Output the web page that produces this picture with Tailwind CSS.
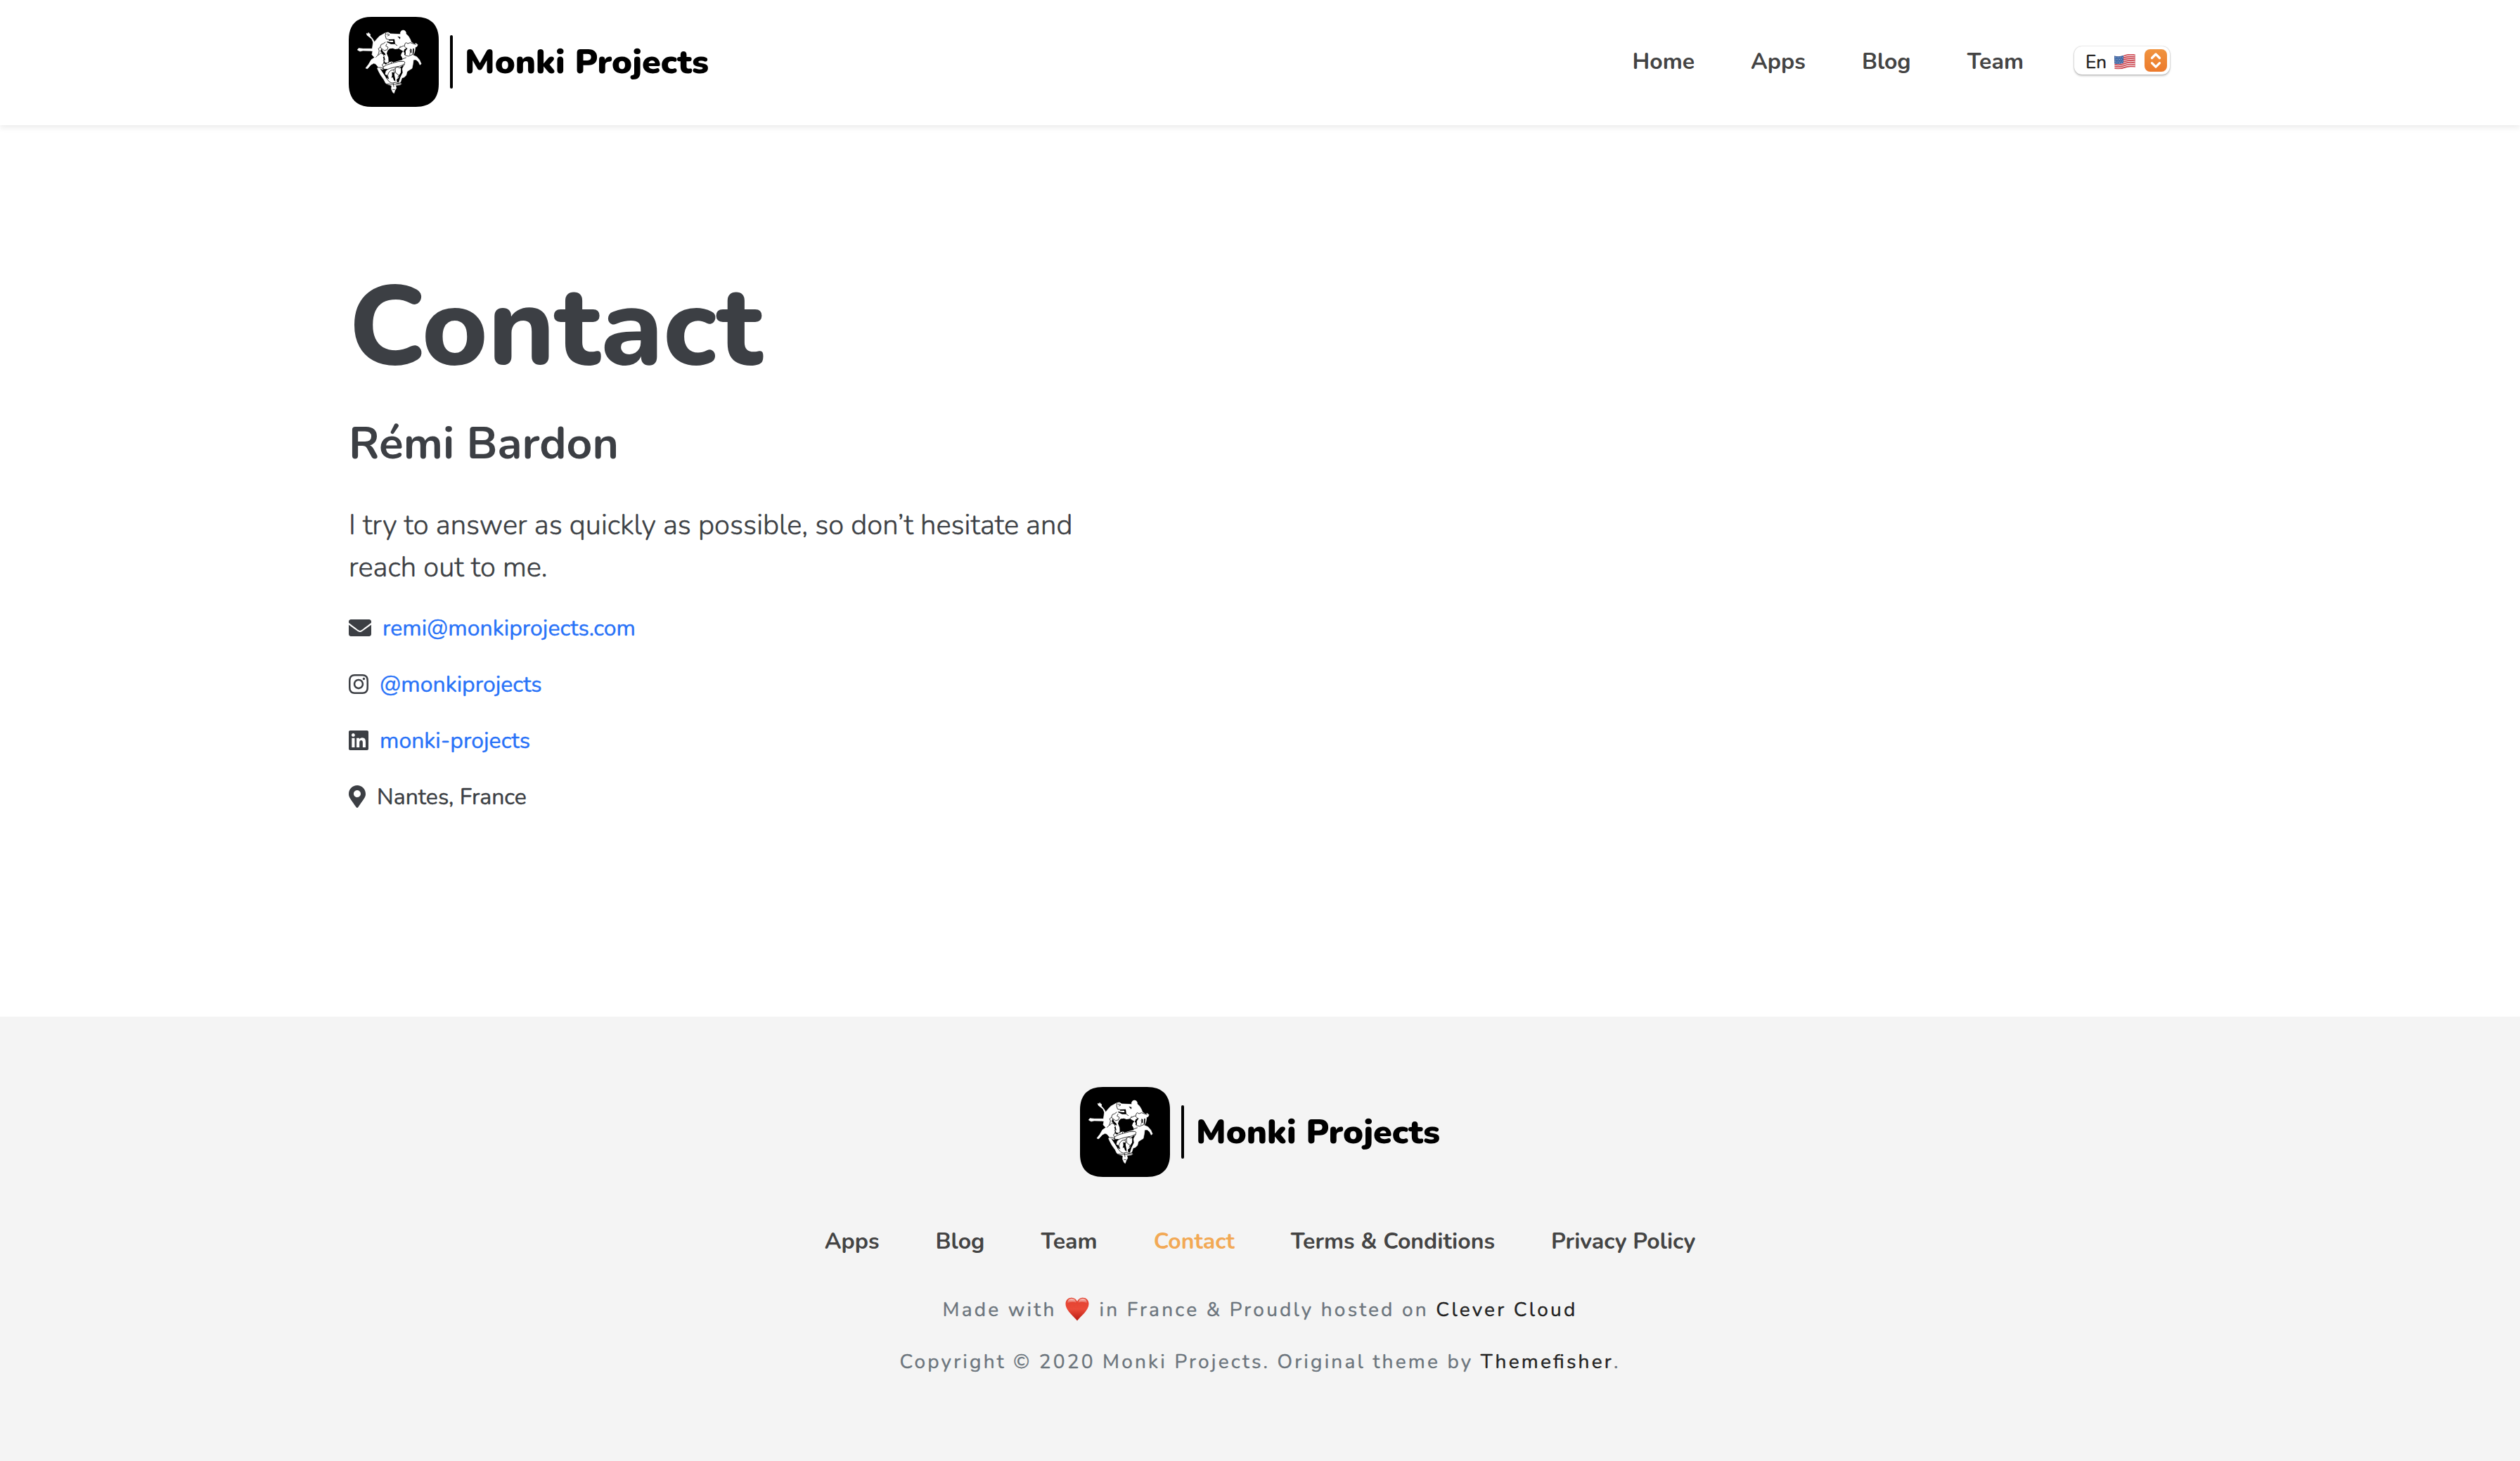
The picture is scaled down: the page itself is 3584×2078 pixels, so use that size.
<!DOCTYPE html>
<html lang="en">
<head>
<meta charset="utf-8">
<title>Contact - Monki Projects</title>
<script src="https://cdn.jsdelivr.net/npm/@tailwindcss/browser@4"></script>
</head>
<body class="bg-white font-[Nunito,Lato,'Open_Sans',sans-serif] text-[#3c3f44]">
<svg class="absolute size-0">
  <defs>
    <linearGradient id="heart" x1="0" y1="0" x2="0" y2="1">
      <stop offset="0" stop-color="#e2402e"/><stop offset=".5" stop-color="#ea4a38"/><stop offset="1" stop-color="#b81a12"/>
    </linearGradient>
    <linearGradient id="shine" x1="0" y1="0" x2="0" y2="1">
      <stop offset="0" stop-color="#fff" stop-opacity=".75"/><stop offset="1" stop-color="#fff" stop-opacity="0"/>
    </linearGradient>
    <symbol id="monki" viewBox="48 42 384 384">
      <path d="M48 140C48 76 82 42 146 42H334C398 42 432 76 432 140V328C432 392 398 426 334 426H146C82 426 48 392 48 328Z"/>
      <path fill="#fff" stroke="#fff" stroke-width="2" stroke-linejoin="round" d="M124 112L130 115L132 109L136 114L140 116L139 123L150 136L158 149L167 137L180 124L196 115L205 110L216 108L226 114L245 115L268 116L269 107Q272 99 280 99Q289 99 292 108L292 114L302 124L310 137L315 150L328 158L336 155L342 161L339 168L332 172L330 188L326 200L321 205L338 212L350 226L357 242L352 247L345 233L335 225L324 225L322 242L318 262L306 269L297 275L293 291L284 300L275 302L268 323L273 328L266 332L248 334L251 346L245 356L241 368L236 364L230 350L231 335L212 329L205 324L198 310L184 290L176 275L170 262L174 256L163 243L155 240L143 246L128 263L120 261L133 244L144 225L158 215L151 208L147 203L150 188L140 187L108 186L96 189L85 183L90 176L110 178L148 178L150 165L152 150L146 136L136 128L126 120Z"/>
      <path d="M214 186L222 178L236 176L246 180L262 178L272 184L280 188L274 196L270 206L276 216L277 226L255 231L238 236L230 232L218 235L217 215L210 198ZM219 138L243 137L246 158L228 158L210 150L212 147L230 150L238 150L237 143L219 143ZM183 188L188 177L194 190L203 198L205 206L194 202ZM256 125L268 128L267 137L262 132ZM198 212L203 222L200 236L212 240L206 245L195 238L200 228L194 214ZM181 262L192 268L208 264L214 266L206 274L203 287L212 291L216 303L218 306L208 303L196 284ZM281 247L276 264L278 280L268 300L261 322L254 322L252 310L262 300L262 292L270 280L271 262L266 258ZM232 278L242 280L243 292L246 306L247 318L240 312L236 300L230 302L233 292ZM310 178L316 180L316 197L311 193ZM322 176L327 178L325 200L320 200ZM286 180L298 174L292 190L290 204L285 204L286 194L281 192Z"/>
      <g fill="none" stroke="#000" stroke-width="2.300" stroke-linejoin="round" stroke-linecap="round">
        <path d="M206 111L204 122L208 136L219 139M210 116Q216 112 222 119L214 123M204 150L196 156L186 160L182 172L174 178L178 186L176 196L172 206L164 214M182 172L190 178L200 186L212 182L216 172L206 166L210 158M246 158L254 164M268 172L280 166L286 166L288 156L292 152L300 156L310 152L316 154L334 160M260 180L268 168M286 168L296 178M174 206L184 196L196 202L200 216L196 230L206 240L220 236M288 206L302 210L312 206L322 202M276 222L292 216M198 240L190 246L196 256L194 264M194 256Q206 246 232 240Q260 230 284 232Q292 236 284 244Q270 254 246 256Q220 262 208 268L194 264M286 244L276 260M218 238L220 232L228 232L230 240M174 258L186 258L198 264M218 306L214 292L218 280L228 270L240 268L246 262L254 256L266 260M240 268L244 282L238 282M246 262L248 280L262 292L258 300M208 303L222 320L232 324L248 322L256 326L272 322M212 328L240 330L272 327M300 190L306 184L310 192L308 202M238 326L240 340M236 352L244 352"/>
      </g>
      <path fill="#fff" d="M290 192Q291 180 302 181Q311 184 308 196L306 204H294Z"/>
    </symbol>
  </defs>
</svg>

<header class="relative h-[178px] bg-white shadow-[0_4px_8px_rgba(0,0,0,.075)]">
  <div class="mx-auto flex h-[176px] w-[2592px] items-center">
    <a class="flex items-center text-black">
      <svg class="size-32"><use href="#monki"/></svg>
      <span class="ml-4 h-[76px] w-1 rounded-full bg-black"></span>
      <span class="ml-[17px] whitespace-nowrap text-[48.3px] font-black leading-none">Monki Projects</span>
    </a>
    <nav class="ml-auto flex gap-20 text-[32px] font-bold text-[#444]">
      <a>Home</a><a>Apps</a><a>Blog</a><a>Team</a>
    </nav>
    <div class="mb-1 ml-[72px] mr-0.5 flex h-10 w-34 items-center rounded-[11px] bg-white pl-4 text-[26px] text-[#222] shadow-[0_0_2px_rgba(0,0,0,.28),0_2px_3px_rgba(0,0,0,.22)]">
      <span class="pt-1.5 leading-none [-webkit-text-stroke:.4px]">En</span>
      <svg class="ml-[11px] mt-[3px] h-[22px] w-[30px]" viewBox="0 0 30 22">
        <clipPath id="wave"><path d="M0 2.500Q7 4.500 14 1.500T30 .5V18.500Q23 18 16 20T.5 21Z"/></clipPath>
        <g clip-path="url(#wave)">
          <path fill="#f1eeee" d="M0 0H30V22H0Z"/>
          <path fill="none" stroke="#cf4650" stroke-width="1.700" d="M0 3.300Q7 5.300 14 2.300T30 1.300M0 6.100Q7 8.100 14 5.100T30 4.100M0 8.900Q7 10.900 14 7.900T30 6.900M0 11.700Q7 13.700 14 10.700T30 9.700M0 14.500Q7 16.500 14 13.500T30 12.500M0 17.300Q7 19.300 14 16.300T30 15.300M0 20.100Q7 22.100 14 19.100T30 18.100"/>
          <path fill="#3f68a5" d="M0 0H13V12.500Q7 15 0 13.500Z"/>
          <path stroke="#a9bfdc" stroke-width="1" stroke-dasharray="1 1.500" d="M1 5H12M2 7.500H12M1 10H12M2 12.300H12"/>
        </g>
      </svg>
      <span class="ml-auto mr-1 flex size-8 items-center justify-center rounded-lg bg-linear-to-b from-[#f0933f] to-[#ec7a2c]">
        <svg class="size-8" viewBox="0 0 32 32" fill="none" stroke="#fff" stroke-width="3.200" stroke-linecap="round" stroke-linejoin="round"><path d="M10.500 12.500L16 7L21.500 12.500M10.500 19.700L16 25.200L21.500 19.700"/></svg>
      </span>
    </div>
  </div>
</header>

<main class="mx-auto h-[1268px] w-[2592px] pt-[191px]">
  <h1 class="text-[160px] font-extrabold leading-[192px]">Contact</h1>
  <h2 class="mt-8 text-[64px] font-bold leading-[77px]">Rémi Bardon</h2>
  <p class="mt-[47px] w-[1060px] text-[40px] font-light leading-[60px] [-webkit-text-stroke:.5px]">I try to answer as quickly as possible, so don’t hesitate and reach out to me.</p>
  <ul class="mt-[31px] flex flex-col gap-[30px] text-[32px] leading-[48px]">
    <li class="flex items-center gap-4">
      <svg class="h-8 w-8" viewBox="0 0 512 512" fill="currentColor"><path d="M502.300 190.800c3.900-3.100 9.700-.2 9.700 4.700V400c0 26.500-21.500 48-48 48H48c-26.500 0-48-21.500-48-48V195.600c0-5 5.700-7.800 9.700-4.700 22.400 17.400 52.100 39.500 154.100 113.600 21.100 15.400 56.700 47.800 92.200 47.600 35.700.3 72-32.800 92.300-47.600 102-74.100 131.600-96.300 154-113.700zM256 320c23.200.4 56.600-29.200 73.400-41.400 132.700-96.300 142.800-104.700 173.400-128.700 5.800-4.500 9.200-11.500 9.200-18.900v-19c0-26.500-21.500-48-48-48H48c-26.500 0-48 21.500-48 48v19c0 7.400 3.400 14.300 9.200 18.900 30.600 23.900 40.700 32.400 173.400 128.700 16.800 12.200 50.200 41.800 73.400 41.400z"/></svg>
      <a class="pt-0.5 text-[#2872f8] [-webkit-text-stroke:.4px]">remi@monkiprojects.com</a>
    </li>
    <li class="flex items-center gap-4">
      <svg class="h-8 w-7" viewBox="0 0 448 512" fill="currentColor"><path d="M224.100 141c-63.600 0-114.900 51.300-114.900 114.900s51.300 114.900 114.900 114.900S339 319.500 339 255.900 287.700 141 224.100 141zm0 189.600c-41.100 0-74.700-33.500-74.700-74.700s33.500-74.700 74.700-74.700 74.700 33.500 74.700 74.700-33.600 74.700-74.700 74.700zm146.400-194.300c0 14.900-12 26.800-26.800 26.800-14.900 0-26.800-12-26.800-26.800s12-26.800 26.800-26.800 26.800 12 26.800 26.800zm76.100 27.200c-1.700-35.900-9.900-67.700-36.200-93.900-26.200-26.200-58-34.400-93.900-36.200-37-2.100-147.900-2.100-184.900 0-35.800 1.700-67.600 9.900-93.900 36.100s-34.400 58-36.200 93.900c-2.100 37-2.100 147.900 0 184.900 1.700 35.900 9.900 67.700 36.200 93.900s58 34.400 93.900 36.200c37 2.100 147.900 2.100 184.900 0 35.900-1.700 67.700-9.900 93.900-36.200 26.200-26.200 34.400-58 36.200-93.900 2.100-37 2.100-147.800 0-184.800zM398.800 388c-7.800 19.600-22.900 34.700-42.600 42.600-29.500 11.700-99.500 9-132.100 9s-102.700 2.600-132.100-9c-19.600-7.800-34.700-22.900-42.600-42.600-11.700-29.500-9-99.500-9-132.100s-2.600-102.700 9-132.100c7.800-19.600 22.900-34.700 42.600-42.600 29.500-11.700 99.500-9 132.100-9s102.700-2.600 132.100 9c19.600 7.800 34.700 22.900 42.600 42.600 11.700 29.500 9 99.500 9 132.100s2.700 102.700-9 132.100z"/></svg>
      <a class="pt-0.5 text-[#2872f8] [-webkit-text-stroke:.4px]">@monkiprojects</a>
    </li>
    <li class="flex items-center gap-4">
      <svg class="h-8 w-7" viewBox="0 0 448 512" fill="currentColor"><path d="M416 32H31.900C14.300 32 0 46.500 0 64.300v383.400C0 465.500 14.300 480 31.900 480H416c17.600 0 32-14.500 32-32.300V64.300c0-17.800-14.400-32.300-32-32.300zM135.400 416H69V202.200h66.500V416zm-33.200-243c-21.300 0-38.500-17.300-38.500-38.500S80.900 96 102.200 96c21.200 0 38.500 17.300 38.500 38.500 0 21.300-17.200 38.500-38.500 38.500zm282.100 243h-66.400V312c0-24.800-.5-56.700-34.500-56.700-34.600 0-39.900 27-39.900 54.900V416h-66.400V202.200h63.700v29.200h.9c8.900-16.800 30.600-34.500 62.900-34.500 67.200 0 79.700 44.300 79.700 101.900V416z"/></svg>
      <a class="pt-0.5 text-[#2872f8] [-webkit-text-stroke:.4px]">monki-projects</a>
    </li>
    <li class="flex items-center gap-4">
      <svg class="h-8 w-6" viewBox="0 0 384 512" fill="currentColor"><path d="M172.268 501.670C26.970 291.031 0 269.413 0 192 0 85.961 85.961 0 192 0s192 85.961 192 192c0 77.413-26.970 99.031-172.268 309.670-9.535 13.774-29.930 13.773-39.464 0zM192 272c44.183 0 80-35.817 80-80s-35.817-80-80-80-80 35.817-80 80 35.817 80 80 80z"/></svg>
      <span class="pt-0.5 [-webkit-text-stroke:.4px]">Nantes, France</span>
    </li>
  </ul>
</main>

<footer class="flex h-[632px] flex-col items-center bg-[#f4f4f4] pt-[100px]">
  <a class="flex w-[512px] items-center text-black">
    <svg class="size-32"><use href="#monki"/></svg>
    <span class="ml-4 h-[76px] w-1 rounded-full bg-black"></span>
    <span class="ml-[17px] whitespace-nowrap text-[48.3px] font-black leading-none">Monki Projects</span>
  </a>
  <nav class="mt-[68px] flex gap-20 text-[32px] font-bold leading-[48px] text-[#444]">
    <a>Apps</a><a>Blog</a><a>Team</a><a class="text-[#f2a955]">Contact</a><a>Terms &amp; Conditions</a><a>Privacy Policy</a>
  </nav>
  <p class="mt-[49px] flex items-center whitespace-pre text-[28px] leading-[48px] tracking-[3.2px] text-[#6c757d] [-webkit-text-stroke:.4px]"><span>Made with</span><svg class="mb-[3px] ml-3 mr-[15px] h-[34px] w-[34px]" viewBox="0 0 34 34"><path fill="url(#heart)" d="M17 33.500C12 27 .5 19 .5 9.500C.5 4 4.500 .8 8.800 .8C12.500 .8 15.700 3 17 6.200C18.300 3 21.500 .8 25.200 .8C29.500 .8 33.500 4 33.500 9.500C33.500 19 22 27 17 33.500Z"/><path fill="url(#shine)" d="M3 9Q3 2 9 2T15.500 8Q9 5 3 9ZM31 9Q31 2 25 2T18.500 8Q25 5 31 9Z"/></svg><span>in France &amp; Proudly hosted on <a class="text-[#222]">Clever Cloud</a></span></p>
  <p class="mt-[26px] text-[28px] leading-[48px] tracking-[3.2px] text-[#6c757d] [-webkit-text-stroke:.4px]">Copyright © 2020 Monki Projects. Original theme by <a class="text-[#222] [font-feature-settings:'liga'_1]">Themefisher</a>.</p>
</footer>
</body>
</html>
